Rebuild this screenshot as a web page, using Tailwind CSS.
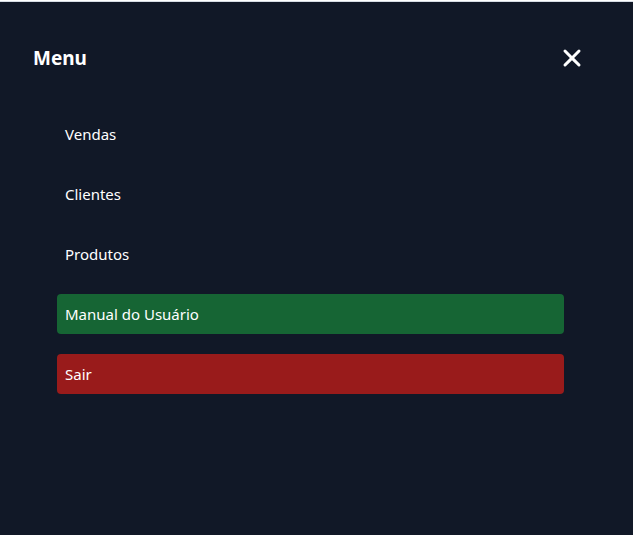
<!DOCTYPE html>
<html lang="pt-BR">
<head>
<meta charset="utf-8">
<meta name="viewport" content="width=device-width, initial-scale=1">
<title>Menu</title>
<script src="https://cdn.jsdelivr.net/npm/@tailwindcss/browser@4"></script>
</head>
<body class="flex min-h-screen flex-col border-t border-white bg-[#111827] font-['Segoe_UI','Noto_Sans',sans-serif] text-white">
  <div class="flex-1 border-t border-[#d6dbe3] pt-10 pr-[45px] pl-[33px]">
    <header class="flex items-center justify-between">
      <h1 class="text-[19px] leading-8 font-bold">Menu</h1>
      <button type="button" aria-label="Fechar menu" class="size-8">
        <svg viewBox="0 0 512 512" class="size-8" fill="currentColor" aria-hidden="true">
          <path d="m289.94 256 95-95A24 24 0 0 0 351 127l-95 95-95-95a24 24 0 0 0-34 34l95 95-95 95a24 24 0 1 0 34 34l95-95 95 95a24 24 0 0 0 34-34z"/>
        </svg>
      </button>
    </header>
    <nav class="px-6 pt-10">
      <ul class="flex flex-col gap-5 text-[15px] leading-6">
        <li><a href="#vendas" class="block rounded p-2">Vendas</a></li>
        <li><a href="#clientes" class="block rounded p-2">Clientes</a></li>
        <li><a href="#produtos" class="block rounded p-2">Produtos</a></li>
        <li><a href="#manual" class="block rounded bg-[#166534] p-2">Manual do Usuário</a></li>
        <li><button type="button" class="block w-full rounded bg-[#991b1b] p-2 text-left">Sair</button></li>
      </ul>
    </nav>
  </div>
</body>
</html>
